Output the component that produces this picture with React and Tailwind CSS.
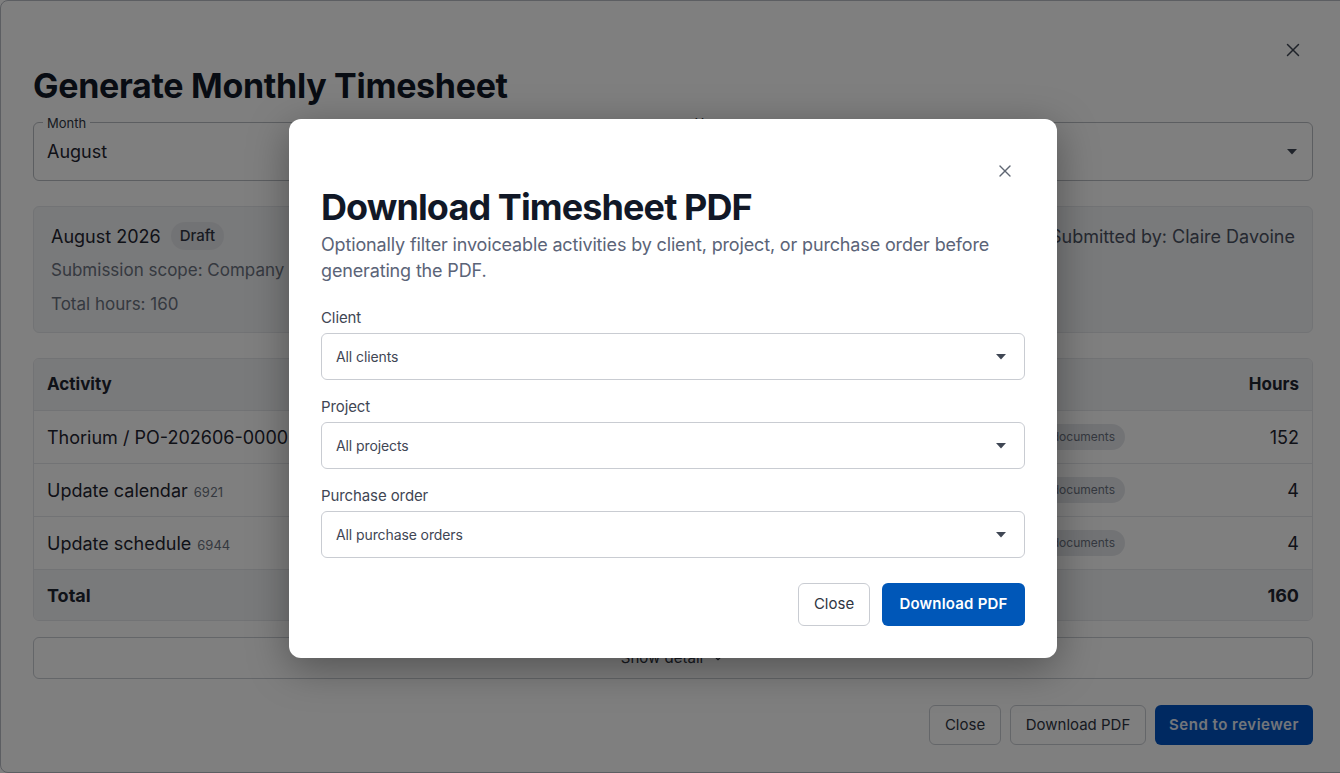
import { X, ChevronDown } from "lucide-react";

const rows = [
  { name: "Thorium / PO-202606-00002 / Platform support", code: "", hours: 152 },
  { name: "Update calendar", code: "6921", hours: 4 },
  { name: "Update schedule", code: "6944", hours: 4 },
];

function Caret() {
  return (
    <svg width="10" height="6" viewBox="0 0 10 6" className="fill-[#3f4654]">
      <path d="M0 0h10L5 5.5z" />
    </svg>
  );
}

function FilterSelect({ label, value }) {
  return (
    <div className="flex flex-col">
      <label className="text-[15px] leading-5 tracking-[-0.1px] text-[#3f4654]">{label}</label>
      <div className="mt-[5px] flex h-[47px] items-center justify-between rounded-md border border-[#c9ccd2] pl-[14px] pr-[18px]">
        <span className="text-[14px] tracking-[-0.1px] text-[#3f4654]">{value}</span>
        <Caret />
      </div>
    </div>
  );
}

function DownloadDialog() {
  return (
    <div className="absolute left-[289px] top-[119px] w-[768px] rounded-xl bg-white px-8 pb-8 pt-[68px] shadow-[0_10px_40px_rgba(0,0,0,0.35)]">
      <button className="absolute right-[40px] top-[40px] flex h-6 w-6 items-center justify-center text-[#5f6673]">
        <X size={20} strokeWidth={1.6} />
      </button>
      <h2 className="text-[36px] font-bold leading-10 tracking-[-0.9px] text-[#111827]">Download Timesheet PDF</h2>
      <p className="mt-[5px] text-[18px] leading-[26px] tracking-[-0.15px] text-[#5b6478]">
        Optionally filter invoiceable activities by client, project, or purchase order before generating the PDF.
      </p>
      <div className="mt-6 flex flex-col gap-[17px]">
        <FilterSelect label="Client" value="All clients" />
        <FilterSelect label="Project" value="All projects" />
        <FilterSelect label="Purchase order" value="All purchase orders" />
      </div>
      <div className="mt-[25px] flex justify-end gap-3">
        <button className="h-[43px] w-[72px] rounded-md border border-[#c9ccd2] bg-white text-[15px] text-[#2f3542]">Close</button>
        <button className="h-[43px] w-[143px] rounded-md bg-[#0057b8] text-[15px] font-semibold tracking-[0.2px] text-white">Download PDF</button>
      </div>
    </div>
  );
}

export default function App() {
  return (
    <div className="relative h-[773px] w-[1340px] overflow-hidden bg-white font-['Inter',sans-serif]">
      <div className="h-full w-[1400px] rounded-lg border border-[#b8bcc4] bg-white pl-[32px] pt-[65px]">
        <button className="absolute right-[36px] top-[39px] text-[#3f4654]">
          <X size={22} strokeWidth={1.6} />
        </button>

        <div className="w-[1280px]">
          <h1 className="text-[34px] font-bold leading-10 tracking-[-0.3px] text-[#111827]">Generate Monthly Timesheet</h1>

          <div className="mt-4 grid grid-cols-2 gap-4">
            <div className="relative flex h-[59px] items-center rounded-md border border-[#b9bcc2] pl-[13px] pr-[18px]">
              <span className="absolute -top-[9px] left-[9px] bg-white px-1 text-[13px] leading-[18px] text-[#2f3542]">Month</span>
              <span className="text-[18px] text-[#1f2430]">August</span>
            </div>
            <div className="relative flex h-[59px] items-center justify-between rounded-md border border-[#b9bcc2] pl-[13px] pr-[15px]">
              <span className="absolute -top-[9px] left-[9px] bg-white px-1 text-[13px] leading-[18px] text-[#2f3542]">Year</span>
              <span className="text-[18px] text-[#1f2430]">2026</span>
              <Caret />
            </div>
          </div>

          <div className="mt-[25px] flex h-[127px] justify-between rounded-md border border-[#e5e7eb] bg-[#f3f4f6] px-[17px] pt-[15px]">
            <div className="flex flex-col">
              <div className="flex h-7 items-center gap-[10px]">
                <span className="text-[18px] text-[#1f2430]">August 2026</span>
                <span className="rounded-full bg-[#e5e7eb] px-[9px] py-[3px] text-[15px] font-medium text-[#2f3542]">Draft</span>
              </div>
              <span className="mt-[6px] text-[17px] leading-[28px] text-[#6b7280]">Submission scope: Company</span>
              <span className="mt-[6px] text-[17px] leading-[28px] text-[#6b7280]">Total hours: 160</span>
            </div>
            <span className="mt-[1px] text-[18px] leading-[28px] text-[#4b5262]">Submitted by: Claire Davoine</span>
          </div>

          <div className="mt-[25px] overflow-hidden rounded-md border border-[#e5e7eb]">
            <div className="flex h-[51px] items-center justify-between bg-[#f3f4f6] px-[13px] text-[17px] font-bold text-[#1f2430]">
              <span>Activity</span>
              <span>Hours</span>
            </div>
            {rows.map((r) => (
              <div key={r.name} className="flex h-[53px] items-center border-t border-[#e5e7eb] pl-[13px] pr-[13px]">
                <span className="flex-1 truncate text-[18px] text-[#1f2430]">
                  {r.name}
                  {r.code && <span className="ml-[6px] text-[13px] text-[#6b7280]">{r.code}</span>}
                </span>
                <span className="flex h-[26px] items-center rounded-full bg-[#e5e7eb] px-[10px] text-[12px] text-[#6b7280]">Missing documents</span>
                <span className="w-[174px] text-right text-[18px] text-[#1f2430]">{r.hours}</span>
              </div>
            ))}
            <div className="flex h-[51px] items-center justify-between border-t border-[#e5e7eb] bg-[#f3f4f6] px-[13px] text-[18px] font-bold text-[#1f2430]">
              <span>Total</span>
              <span>160</span>
            </div>
          </div>

          <button className="mt-4 flex h-[42px] w-full items-center justify-center gap-2 rounded-md border border-[#c9ccd2] text-[15px] text-[#2f3542]">
            Show detail
            <ChevronDown size={14} />
          </button>

          <div className="mt-[26px] flex justify-end gap-[9px]">
            <button className="h-10 w-[72px] rounded-md border border-[#c9ccd2] text-[15px] text-[#2f3542]">Close</button>
            <button className="h-10 w-[136px] rounded-md border border-[#c9ccd2] text-[15px] text-[#2f3542]">Download PDF</button>
            <button className="h-10 w-[158px] rounded-md bg-[#0052c2] text-[15px] font-semibold tracking-[0.5px] text-[#e6ecf6]">Send to reviewer</button>
          </div>
        </div>
      </div>

      <div className="absolute inset-0 bg-black/50" />
      <DownloadDialog />
    </div>
  );
}
